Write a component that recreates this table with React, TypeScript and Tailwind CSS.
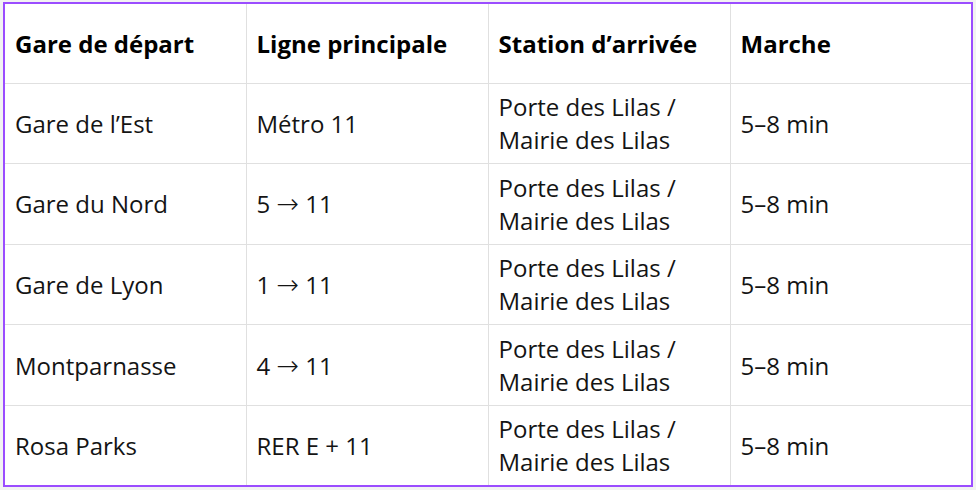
export default function App() {
  const rows = [
    { gare: 'Gare de l’Est', ligne: 'Métro 11' },
    { gare: 'Gare du Nord', ligne: '5 → 11' },
    { gare: 'Gare de Lyon', ligne: '1 → 11' },
    { gare: 'Montparnasse', ligne: '4 → 11' },
    { gare: 'Rosa Parks', ligne: 'RER E + 11' },
  ];

  const cell = 'border border-[#e0e0e0] px-[10px] align-middle w-[241px]';

  const renderLigne = (txt: string) => {
    const parts = txt.split('→');
    if (parts.length === 1) return txt;
    return (
      <>
        {parts[0]}
        <span className="font-['DejaVu_Sans'] font-extralight text-[27px] leading-none">→</span>
        {parts[1]}
      </>
    );
  };

  return (
    <div
      className="min-h-[490px] w-[976px] bg-[#f2f2f2] pt-[2px] pl-[3px]"
      style={{ fontFamily: '"Open Sans", "Noto Sans", sans-serif' }}
    >
      <table className="w-[970px] table-fixed border-collapse border-2 border-[#9b4dff] bg-white text-[24px] leading-[33px] text-[#141414]">
        <thead>
          <tr>
            <th className={`${cell} h-[80px] text-left font-bold text-black`}>Gare de départ</th>
            <th className={`${cell} h-[80px] text-left font-bold text-black`}>Ligne principale</th>
            <th className={`${cell} h-[80px] text-left font-bold text-black`}>Station d’arrivée</th>
            <th className={`${cell} h-[80px] text-left font-bold text-black`}>Marche</th>
          </tr>
        </thead>
        <tbody>
          {rows.map((r) => (
            <tr key={r.gare}>
              <td className={`${cell} h-[80.6px]`}>{r.gare}</td>
              <td className={`${cell} h-[80.6px]`}>{renderLigne(r.ligne)}</td>
              <td className={`${cell} h-[80.6px]`}>
                Porte des Lilas /<br />
                Mairie des Lilas
              </td>
              <td className={`${cell} h-[80.6px]`}>5–8 min</td>
            </tr>
          ))}
        </tbody>
      </table>
    </div>
  );
}
